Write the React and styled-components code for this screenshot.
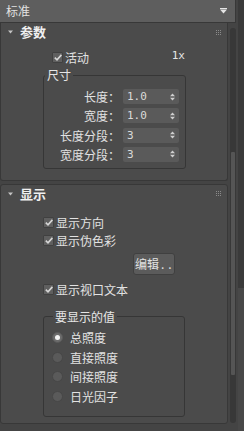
import React from 'react';
import styled, { createGlobalStyle } from 'styled-components';

const Global = createGlobalStyle`
  html, body { margin: 0; padding: 0; background: #444444; }
  body { font-family: "Noto Sans CJK SC", "Noto Sans", sans-serif; color: #dedede; }
  * { box-sizing: border-box; }
`;

const Root = styled.div`
  width: 244px;
  height: 431px;
  display: flex;
  overflow: hidden;
  background: #444444;
`;

const MainCol = styled.div`
  width: 238px;
  display: flex;
  flex-direction: column;
`;

const RightStrip = styled.div`
  width: 6px;
  background: linear-gradient(#3a3a3a 0 288px, #484848 288px);
`;

const Dropdown = styled.div`
  height: 23px;
  width: 236px;
  background: #5e5e5e;
  border-bottom: 1px solid #383838;
  border-right: 1px solid #383838;
  display: flex;
  align-items: center;
  justify-content: space-between;
  padding: 0 8px 0 6px;
  font-size: 12px;
  line-height: 14px;
  color: #e2e2e2;
`;

const Body = styled.div`
  display: flex;
  flex: 1;
`;

const Panels = styled.div`
  width: 228px;
  display: flex;
  flex-direction: column;
  gap: 3px;
`;

const Panel = styled.section`
  background: #4b4b4b;
  border: 1px solid #383838;
  border-top: ${p => (p.$clipped ? 'none' : '1px solid #383838')};
  border-radius: ${p => (p.$clipped ? '0 0 3px 3px' : '3px')};
  padding-bottom: ${p => p.$padBottom}px;
  display: flex;
  flex-direction: column;
`;

const Header = styled.div`
  height: 18px;
  display: flex;
  align-items: center;
  padding-left: 7px;
  padding-right: 6px;
  gap: 7px;
  font-size: 13px;
  font-weight: bold;
  color: #f0f0f0;
`;

const HeaderTitle = styled.span`
  line-height: 16px;
`;

const Grip = styled.svg`
  margin-left: auto;
  display: block;
`;

const CheckRow = styled.label`
  height: 15px;
  display: flex;
  align-items: center;
  gap: 2px;
  padding-left: ${p => p.$indent}px;
  padding-right: ${p => p.$padRight || 0}px;
  margin-top: ${p => p.$top}px;
  font-size: 12px;
  line-height: 15px;
  color: #e2e2e2;
`;

const Box = styled.span`
  width: 11px;
  height: 11px;
  flex: none;
  background: #5f5f5f;
  border: 1px solid #404040;
  border-radius: 1px;
  display: flex;
  align-items: center;
  justify-content: center;
`;

const Scale = styled.span`
  margin-left: auto;
  font-family: "DejaVu Sans Mono", "Liberation Mono", monospace;
  font-size: 11px;
  line-height: 12px;
  margin-top: -3px;
  color: #e6e6e6;
`;

const Group = styled.fieldset`
  margin: ${p => p.$top}px ${p => p.$right}px 0 42px;
  padding: ${p => p.$padTop}px 0 ${p => p.$padBottom}px ${p => p.$padLeft || 0}px;
  border: 1px solid #363636;
  border-radius: 3px;
  min-width: 0;
`;

const Legend = styled.legend`
  margin-left: 1px;
  padding: 0 2px;
  font-size: 12px;
  line-height: 14px;
  color: #e6e6e6;
`;

const FieldGrid = styled.div`
  display: grid;
  grid-template-columns: 76px 56px;
  column-gap: 3px;
  row-gap: 4.33px;
`;

const FieldLabel = styled.span`
  text-align: right;
  font-size: 12px;
  line-height: 15px;
  color: #e2e2e2;
  white-space: nowrap;
`;

const Spinner = styled.div`
  height: 15px;
  background: #5a5a5a;
  border-radius: 2px;
  display: flex;
  align-items: center;
  padding: 0 4px;
  font-family: "DejaVu Sans Mono", "Liberation Mono", monospace;
  font-size: 11px;
  color: #dadada;
`;

const SpinArrows = styled.svg`
  margin-left: auto;
  display: block;
`;

const Button = styled.button`
  width: 42px;
  height: 22px;
  margin: 5px 0 0 132px;
  padding: 0 0 0 1px;
  background: #5b5b5b;
  border: 1px solid #404040;
  border-radius: 3px;
  color: #e2e2e2;
  font-family: "Noto Sans CJK SC", "Noto Sans", sans-serif;
  font-size: 12px;
  line-height: 14px;
  display: flex;
  align-items: center;
  justify-content: flex-start;
  white-space: nowrap;
`;

const Dots = styled.span`
  letter-spacing: 4px;
  margin-left: 2px;
`;

const RadioList = styled.div`
  display: flex;
  flex-direction: column;
  gap: 4.6px;
`;

const RadioRow = styled.label`
  height: 15px;
  display: flex;
  align-items: center;
  gap: 7px;
  font-size: 12px;
  line-height: 15px;
  color: #e2e2e2;
`;

const RadioDot = styled.span`
  width: 11px;
  height: 11px;
  flex: none;
  border-radius: 50%;
  background: ${p => (p.$on ? '#6c6c6c' : '#5a5a5a')};
  border: 1px solid ${p => (p.$on ? '#5a5a5a' : '#474747')};
  display: flex;
  align-items: center;
  justify-content: center;
  &::after {
    content: '';
    display: ${p => (p.$on ? 'block' : 'none')};
    width: 5px;
    height: 5px;
    border-radius: 50%;
    background: #f4f4f4;
  }
`;

const ScrollCol = styled.div`
  width: 6px;
  margin-left: 2px;
`;

const Track = styled.div`
  margin-top: 5px;
  height: 395px;
  width: 6px;
  background: #383838;
  border-radius: 3px;
  padding: 124px 1px 0;
`;

const Thumb = styled.div`
  height: 223px;
  width: 4px;
  background: #555555;
  border-radius: 1px;
`;

const Tri = () => (
  <svg width="5" height="4" viewBox="0 0 5 4" style={{ display: 'block' }}>
    <path d="M0 0.5H5L2.5 3.5Z" fill="#c4c4c4" />
  </svg>
);

const DropArrow = () => (
  <svg width="7" height="6" viewBox="0 0 7 6" style={{ display: 'block' }}>
    <rect x="0" y="0" width="7" height="1" fill="#e4e4e4" />
    <path d="M0 1.5H7L3.5 5.5Z" fill="#e4e4e4" />
  </svg>
);

const GripDots = () => (
  <Grip width="5" height="5" viewBox="0 0 5 5">
    {[0, 2, 4].map(y =>
      [0, 2, 4].map(x => <rect key={`${x}-${y}`} x={x} y={y} width="1" height="1" fill="#8a8a8a" />)
    )}
  </Grip>
);

const Check = () => (
  <Box>
    <svg width="8" height="7" viewBox="0 0 8 7" style={{ display: 'block' }}>
      <path d="M0.8 3.6L3 5.8L7.4 0.9" stroke="#d6d6d6" strokeWidth="1.6" fill="none" />
    </svg>
  </Box>
);

const Field = ({ label, value }) => (
  <>
    <FieldLabel>{label}</FieldLabel>
    <Spinner>
      <span>{value}</span>
      <SpinArrows width="5" height="8" viewBox="0 0 5 8">
        <path d="M0 3.3H5L2.5 0.5Z" fill="#cfcfcf" />
        <path d="M0 4.7H5L2.5 7.5Z" fill="#cfcfcf" />
      </SpinArrows>
    </Spinner>
  </>
);

export default function App() {
  return (
    <>
      <Global />
      <Root>
        <MainCol>
          <Dropdown>
            <span>标准</span>
            <DropArrow />
          </Dropdown>
          <Body>
            <Panels>
              <Panel $clipped $padBottom={11}>
                <Header>
                  <Tri />
                  <HeaderTitle>参数</HeaderTitle>
                  <GripDots />
                </Header>
                <CheckRow $indent={51} $padRight={42} $top={9}>
                  <Check />
                  <span>活动</span>
                  <Scale>1x</Scale>
                </CheckRow>
                <Group $top={3} $right={41} $padTop={7} $padBottom={6}>
                  <Legend>尺寸</Legend>
                  <FieldGrid>
                    <Field label="长度：" value="1.0" />
                    <Field label="宽度：" value="1.0" />
                    <Field label="长度分段：" value="3" />
                    <Field label="宽度分段：" value="3" />
                  </FieldGrid>
                </Group>
              </Panel>
              <Panel $padBottom={6}>
                <Header>
                  <Tri />
                  <HeaderTitle>显示</HeaderTitle>
                  <GripDots />
                </Header>
                <CheckRow $indent={42} $top={12}>
                  <Check />
                  <span>显示方向</span>
                </CheckRow>
                <CheckRow $indent={42} $top={3}>
                  <Check />
                  <span>显示伪色彩</span>
                </CheckRow>
                <Button>
                  编辑<Dots>..</Dots>
                </Button>
                <CheckRow $indent={42} $top={7}>
                  <Check />
                  <span>显示视口文本</span>
                </CheckRow>
                <Group $top={13} $right={42} $padTop={6} $padBottom={12} $padLeft={8}>
                  <Legend>要显示的值</Legend>
                  <RadioList>
                    <RadioRow><RadioDot $on /><span>总照度</span></RadioRow>
                    <RadioRow><RadioDot /><span>直接照度</span></RadioRow>
                    <RadioRow><RadioDot /><span>间接照度</span></RadioRow>
                    <RadioRow><RadioDot /><span>日光因子</span></RadioRow>
                  </RadioList>
                </Group>
              </Panel>
            </Panels>
            <ScrollCol>
              <Track>
                <Thumb />
              </Track>
            </ScrollCol>
          </Body>
        </MainCol>
        <RightStrip />
      </Root>
    </>
  );
}
